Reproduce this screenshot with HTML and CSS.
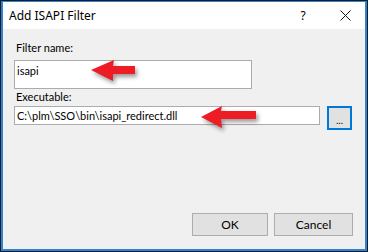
FILE: index.html
```html
<!DOCTYPE html>
<html lang="en">
<head>
  <meta charset="UTF-8">
  <title>Add ISAPI Filter</title>
  <link rel="stylesheet" href="styles.css">
</head>
<body>
  <div class="frame">
    <div class="window">
      <div class="titlebar">
        <span class="title">Add ISAPI Filter</span>
        <span class="tb-btn help">?</span>
        <span class="tb-btn close">
          <svg width="11" height="11" viewBox="0 0 11 11"><path d="M0.5 0.5L10.5 10.5M10.5 0.5L0.5 10.5" stroke="#111" stroke-width="1" fill="none"/></svg>
        </span>
      </div>

      <div class="content">
        <label class="label first" for="filterName">Filter name:</label>
        <div class="textbox tall" id="filterName">isapi</div>

        <label class="label" for="exe">Executable:</label>
        <div class="exe-row">
          <div class="textbox wide" id="exe">C:\plm\SSO\bin\isapi_redirect.dll</div>
          <button class="browse">...</button>
        </div>

        <div class="spacer"></div>

        <div class="footer">
          <button class="button">OK</button>
          <button class="button">Cancel</button>
        </div>
      </div>

      <!-- red callout arrows drawn over the dialog -->
      <svg class="arrows" width="368" height="252" viewBox="0 0 368 252">
        <polygon points="91,70 114,60 113,66 135,66 135,74 113,74 113,81" />
        <polygon points="201,117 222,106 221,111 256,111 256,119 221,119 222,128" />
      </svg>
    </div>
  </div>
</body>
</html>
```

FILE: styles.css
```css
html, body {
  margin: 0;
  padding: 0;
}
body {
  font-family: Lato, "Noto Sans", sans-serif;
  font-size: 11px;
  color: #000;
  width: 368px;
  height: 252px;
  overflow: hidden;
}
.frame {
  box-sizing: border-box;
  width: 368px;
  height: 252px;
  border: 1px solid #1b1b1b;
}
.window {
  position: relative;
  box-sizing: border-box;
  height: 100%;
  display: flex;
  flex-direction: column;
  background: #f0f0f0;
  border: 2px solid #2a83d8;
  border-top-width: 1px;
}
.titlebar {
  height: 27px;
  display: flex;
  align-items: center;
  background: #fff;
}
.title {
  flex: 1;
  padding-left: 6px;
  font-family: "Noto Sans", sans-serif;
  font-size: 12px;
}
.tb-btn {
  display: flex;
  align-items: center;
  justify-content: center;
  height: 27px;
}
.help {
  width: 44px;
  font-family: "Noto Sans", sans-serif;
  font-size: 12px;
}
.close {
  width: 40px;
}
.content {
  flex: 1;
  display: flex;
  flex-direction: column;
  padding: 0 12px 13px 11px;
}
.label {
  display: block;
  line-height: 16px;
  height: 16px;
  padding-left: 2px;
}
.label.first {
  margin-top: 11px;
  margin-bottom: 4px;
}
.textbox {
  box-sizing: border-box;
  background: #fff;
  border: 1px solid #acacac;
  padding: 2px 2px;
  line-height: 16px;
}
.tall {
  width: 238px;
  height: 29px;
}
.exe-row {
  display: flex;
  align-items: flex-start;
  gap: 7px;
  margin-top: 1px;
}
.wide {
  width: 306px;
  height: 19px;
  padding-top: 1px;
}
.browse {
  box-sizing: border-box;
  width: 25px;
  height: 24px;
  padding: 4px 0 0;
  background: #e1e1e1;
  border: 2px solid #0078d7;
  font-family: inherit;
  font-size: 10px;
  line-height: 10px;
}
.spacer {
  flex: 1;
}
.footer {
  display: flex;
  justify-content: flex-end;
  gap: 6px;
}
.button {
  box-sizing: border-box;
  width: 76px;
  height: 23px;
  background: #e1e1e1;
  border: 1px solid #adadad;
  font-family: inherit;
  font-size: 12px;
  padding: 0;
}
.button + .button {
  width: 79px;
}
.arrows {
  position: absolute;
  left: -3px;
  top: -2px;
  pointer-events: none;
  filter: drop-shadow(2px 3px 2px rgba(0, 0, 0, 0.4));
}
.arrows polygon {
  fill: #ee1c25;
}
```
